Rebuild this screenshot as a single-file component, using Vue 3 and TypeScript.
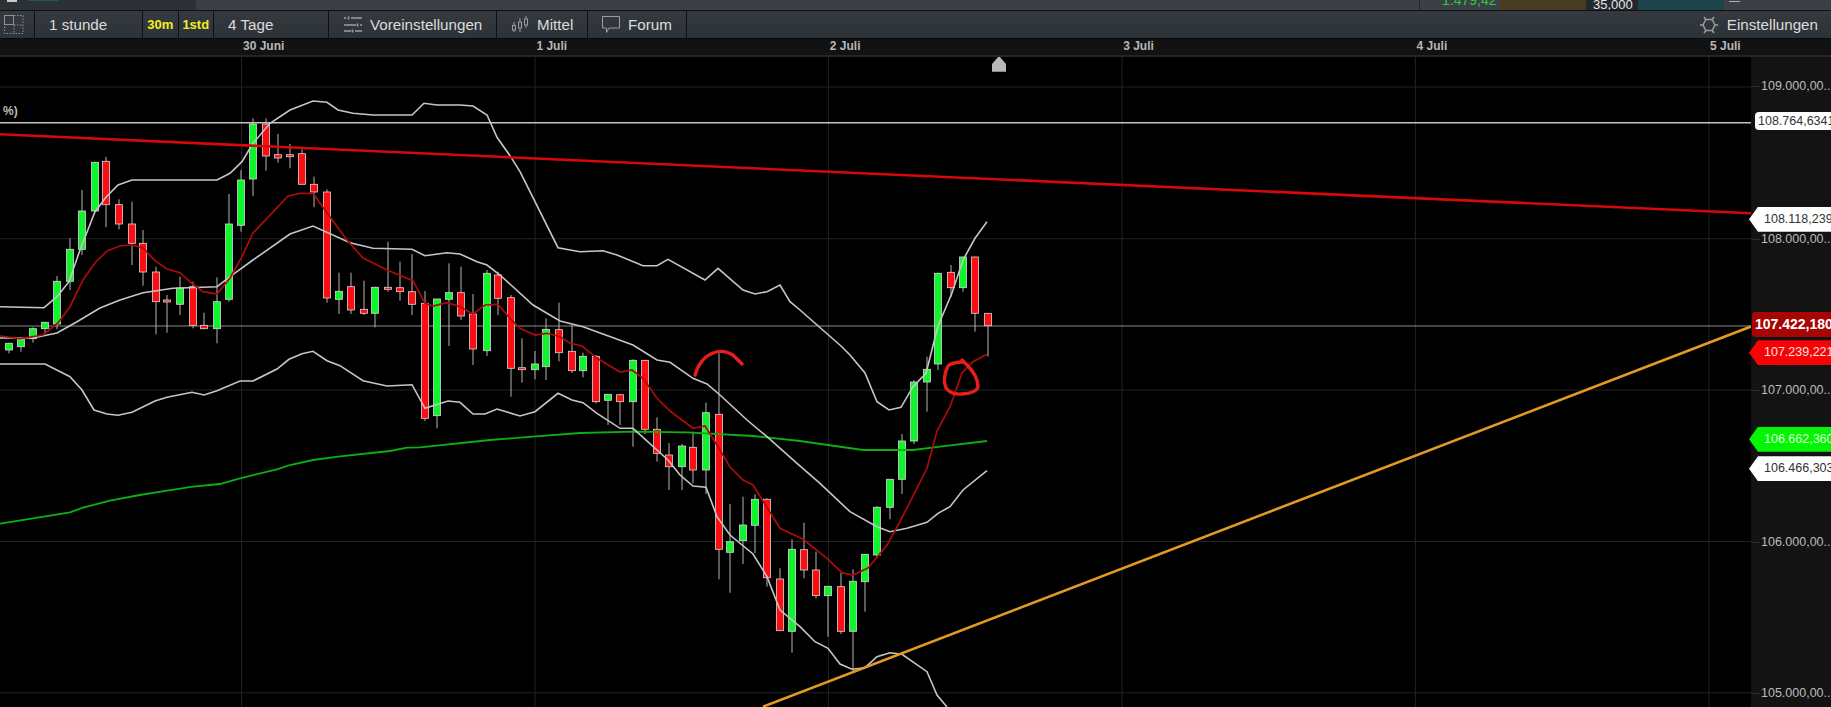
<script setup lang="ts">
type Pt = [number, number];
// x, wick top, wick bottom, body top, body bottom, up
type Candle = [number, number, number, number, number, boolean];

const dates = ['30 Juni', '1 Juli', '2 Juli', '3 Juli', '4 Juli', '5 Juli'];
const gridX = [241.5, 535, 828.4, 1122, 1415.4, 1709];
const gridY = [87, 238.7, 390, 541.5, 692.8];

const candles: Candle[] = [
  [9, 342.7, 353.3, 343.3, 350, true], [21, 337.3, 351.7, 339.3, 346.7, true],
  [33, 327.3, 342.7, 328.7, 338.7, true], [45, 321.7, 333.3, 322.3, 328.7, true],
  [57, 276, 329.3, 281.3, 324, true], [70, 238.3, 290, 249.3, 281.3, true],
  [82, 190, 255, 211, 249.3, true], [95, 161.7, 211.7, 162.3, 211, true],
  [106, 156.7, 227.3, 161.3, 204.7, false], [119, 199.3, 229.3, 204.7, 224, false],
  [132, 201.7, 265, 224, 243.3, false], [143, 230, 285.7, 243.3, 272, false],
  [156, 266.7, 334.3, 272, 301.7, false], [167, 295, 332.7, 300, 302, false],
  [180, 276.7, 315, 288, 304.3, true], [193, 281.7, 328.3, 286.7, 325.3, false],
  [204, 312.7, 329.3, 325.3, 328.7, false], [217, 277.3, 343.3, 301.7, 328.7, true],
  [229, 194, 301.7, 224, 299.3, true], [241, 170, 231.7, 180, 225.3, true],
  [253, 118.3, 196, 124, 179, true], [266, 118.3, 170.7, 124, 156, false],
  [278, 134, 162.7, 154.7, 158, false], [290, 144, 168.3, 154.7, 156.7, false],
  [302, 149.3, 185, 153.7, 184.3, false], [314, 176.7, 207.3, 184.3, 192, false],
  [327, 189.3, 302.7, 192, 298, false], [339, 272.7, 314, 291.3, 299.3, true],
  [351, 272.7, 314, 286.7, 310, false], [364, 280.7, 315, 309.3, 313.3, false],
  [375, 286.7, 327.3, 287.3, 313.3, true], [388, 241.7, 291.7, 287.3, 289.3, false],
  [400, 261.7, 300.7, 287.7, 291.7, false], [412, 254, 315, 291.7, 304.3, false],
  [425, 291, 421, 303.3, 418.3, false], [437, 299, 428.3, 299, 415.7, true],
  [449, 263.3, 346, 292.7, 299.3, true], [461, 266.7, 320, 292.7, 316, false],
  [473, 294, 365, 314, 349, false], [487, 270, 356, 273.3, 350.7, true],
  [498, 271.7, 315, 275, 298.3, false], [511, 295, 396.7, 297.7, 368.3, false],
  [522, 338.3, 382.7, 367.7, 369.7, false], [535, 351, 379.3, 364, 369.7, true],
  [546, 318.3, 380, 329.3, 366.7, true], [559, 302.7, 361.3, 329.7, 352.7, false],
  [572, 325, 373, 351.3, 370.7, false], [583, 352.7, 377.3, 356.3, 370.7, true],
  [596, 355, 403.3, 356.3, 401.7, false], [608, 394.3, 425, 394.3, 400.3, true],
  [620, 394.3, 425, 394.7, 401.7, false], [633, 359.3, 446.7, 360.3, 401.7, true],
  [645, 360, 434, 360.3, 429.3, false], [657, 417.3, 461.7, 429.3, 453.3, false],
  [669, 443, 490, 455, 466.7, false], [682, 444, 490, 446, 466.7, true],
  [693, 431.7, 483.3, 447.3, 470, false], [706, 402.5, 494, 412.7, 470, true],
  [719, 353.3, 579.3, 414.3, 549.3, false], [730, 504, 592.7, 541.7, 552.3, true],
  [743, 496.7, 564, 525, 540.7, true], [755, 494.3, 553.3, 499.3, 525.3, true],
  [767, 498.3, 586.7, 499.3, 577.7, false], [780, 568.3, 630.7, 579, 630.7, false],
  [792, 539.3, 652.7, 549.3, 631.3, true], [804, 522.7, 578.3, 549.7, 570, false],
  [816, 551.7, 598.3, 570, 595.7, false], [828, 586, 636.7, 586.3, 595.7, true],
  [841, 572.7, 634, 586.7, 631.3, false], [853, 569.3, 671.7, 581.3, 631.3, true],
  [865, 554, 611.7, 554.3, 581.7, true], [877, 506, 558.3, 507.3, 555, true],
  [890, 479.3, 519.3, 479.3, 507.3, true], [902, 434, 494, 441, 479.3, true],
  [914, 380, 444, 382, 441, true], [927, 356.7, 411.7, 369.3, 382, true],
  [938, 272.7, 370, 273.3, 364, true], [951, 265, 297, 272.3, 287.7, false],
  [963, 256.7, 291.7, 257, 287.7, true], [975, 256.7, 331.7, 257, 313.3, false],
  [988, 313.3, 356.7, 313.3, 325.7, false],
];

const upperBand: Pt[] = [
  [0, 306.7], [44, 307.7], [57, 296.7], [69, 281.7], [80, 250], [95, 211.7], [106, 197.3], [118, 185],
  [132, 180], [217, 180], [230, 173.3], [242, 161.7], [253, 143.3], [270, 123.3], [290, 110], [313, 101],
  [327, 102.3], [338, 110], [353, 113.3], [373, 115], [412, 115], [424, 103.3], [437, 105], [460, 105],
  [473, 106], [487, 115], [497, 137.3], [510, 155.7], [520, 171.7], [558, 247.7], [580, 251.7], [603, 250.7],
  [617, 255], [643, 265.7], [657, 265.7], [668, 259.3], [705, 280], [718, 268.3], [743, 290], [755, 294],
  [767, 291.7], [780, 285], [790, 301.7], [800, 310], [841, 346], [850, 355], [865, 373], [877, 401.7],
  [889, 410], [901, 407.3], [913, 386.7], [926, 373.3], [938, 326], [952, 293], [963, 260], [975, 238.3], [987, 221.7],
];
const middleBand: Pt[] = [
  [0, 338], [33, 338], [57, 333], [77, 321.7], [100, 308], [120, 300], [143, 292.7], [173, 288.3], [217, 286.7],
  [230, 276.7], [253, 260], [290, 234], [313, 226], [350, 242.7], [373, 248.3], [412, 249.3], [425, 255.7],
  [447, 252.7], [460, 254], [477, 261.7], [487, 265], [500, 275], [533, 305], [560, 321], [583, 326.7], [633, 345],
  [657, 360], [670, 362.3], [693, 378.3], [707, 384], [720, 395], [747, 420], [767, 436.7], [797, 463.3],
  [820, 483.3], [850, 511.7], [877, 526.7], [890, 531.7], [907, 528.3], [927, 522.3], [938, 513.3], [950, 506.7],
  [963, 490], [987, 470.7],
];
const lowerBand: Pt[] = [
  [0, 364], [45, 364], [70, 376.7], [82, 390], [94, 410], [107, 414], [118, 415.3], [132, 412.3], [155, 401],
  [167, 397.3], [192, 392.3], [204, 395], [217, 390.7], [240, 381], [253, 381], [277, 369], [289, 359.3],
  [302, 353.7], [313, 351.3], [327, 360.7], [340, 365.7], [363, 380.7], [387, 386], [412, 384.7], [425, 408.3],
  [448, 401], [460, 402.3], [473, 414], [485, 414], [497, 409], [520, 416], [535, 411.7], [558, 393.3], [572, 400],
  [583, 402.7], [597, 413.3], [620, 428.3], [633, 428.3], [668, 460], [680, 475], [693, 486], [706, 487.3],
  [717, 516.7], [730, 535], [753, 554], [767, 576.7], [780, 610], [800, 626.7], [815, 641.7], [828, 648.3],
  [840, 664], [852, 669.3], [865, 667.7], [877, 656.7], [890, 652.7], [902, 654.3], [927, 671.7], [937, 695], [947, 707],
];
const average: Pt[] = [
  [0, 336], [20, 338.7], [43, 335], [58, 323], [70, 306.7], [83, 280], [95, 262.7], [107, 251], [120, 246], [132, 245],
  [143, 248], [155, 260.7], [167, 269], [180, 272.7], [193, 284.3], [203, 291.7], [217, 294], [230, 278], [242, 256.7],
  [253, 233], [267, 218.3], [288, 196], [300, 193.3], [313, 193.3], [327, 213], [347, 240], [363, 258], [387, 270],
  [413, 280.7], [425, 303.3], [433, 306], [447, 302.7], [460, 306.7], [473, 314], [485, 305], [498, 304.3], [510, 318.3],
  [520, 328.3], [535, 335], [547, 333.3], [560, 336.7], [570, 343.3], [582, 346], [597, 358.3], [620, 372], [632, 370],
  [643, 378.3], [657, 398.3], [670, 411], [693, 428.3], [705, 426], [718, 446.7], [730, 467], [743, 480], [753, 485],
  [780, 528.3], [803, 539.3], [827, 558.3], [842, 572.7], [853, 575], [868, 568], [887, 545], [900, 521.7], [927, 468.3],
  [937, 431], [950, 406.7], [962, 373], [973, 361.7], [987, 354.3],
];
const longAverage: Pt[] = [
  [0, 523.7], [33, 518.3], [70, 512.3], [83, 507.7], [110, 500.7], [140, 495], [167, 490.7], [193, 486.7], [220, 484],
  [240, 478.3], [277, 469.3], [290, 465], [313, 460], [340, 456.3], [390, 451], [407, 447.7], [420, 447.3], [490, 440],
  [533, 436.7], [580, 433], [633, 431.7], [687, 432.3], [753, 436], [800, 441], [863, 450], [913, 450], [940, 446.7], [987, 441],
];

const toPoints = (pts: Pt[]) => pts.map((p) => p.join(',')).join(' ');

const bands = [upperBand, middleBand, lowerBand].map(toPoints);

const axisTop = 57;
const ticks = [
  { y: 86, text: '109.000,00..' },
  { y: 238.7, text: '108.000,00..' },
  { y: 390, text: '107.000,00..' },
  { y: 541.5, text: '106.000,00..' },
  { y: 692.8, text: '105.000,00..' },
];
const tags = [
  { y: 124.5, text: '108.764,6341', kind: 'plain' },
  { y: 219.3, text: '108.118,239', kind: 'white' },
  { y: 324.5, text: '107.422,180', kind: 'last' },
  { y: 352.7, text: '107.239,221', kind: 'red' },
  { y: 439.3, text: '106.662,360', kind: 'green' },
  { y: 468.7, text: '106.466,303', kind: 'white' },
];
</script>

<template>
  <div class="page">
    <div class="quotes">
      <div class="quotes-left">
        <span class="dash"></span>
        <span class="teal-bit"></span>
      </div>
      <div class="quotes-right">
        <span class="change">1.479,42</span>
        <span class="box box-brown"></span>
        <span class="size">35,000</span>
        <span class="box box-teal"></span>
        <span class="dash dash-right"></span>
      </div>
    </div>

    <div class="toolbar">
      <div class="cell cell-grid">
        <svg width="20" height="20" viewBox="0 0 20 20" fill="none" stroke="#8d9195">
          <rect x="0.5" y="0.5" width="9" height="9" />
          <path d="M10 .5h9v18H.5V10M10 10h9M10 10v9" stroke-dasharray="1.5 1.5" />
        </svg>
      </div>
      <div class="cell cell-range">1 stunde</div>
      <div class="cell cell-pick">30m</div>
      <div class="cell cell-pick">1std</div>
      <div class="cell cell-days">4 Tage</div>
      <div class="cell cell-presets">
        <svg width="18" height="18" viewBox="0 0 18 18" fill="none" stroke="#9a9ea2" stroke-width="1.6">
          <path d="M0 2h2M7 2h11M4.5 .5v3M0 9h12M16 9h2M13.5 7.5v3M0 15h7M11 15h7M8.5 13.5v3" />
        </svg>
        <span>Voreinstellungen</span>
      </div>
      <div class="cell cell-mean">
        <svg width="18" height="20" viewBox="0 0 18 20" fill="none" stroke="#9a9ea2">
          <path d="M3 7v3M3 15v2M9 3v4M9 13v4M15 1v3M15 10v3" />
          <rect x="1.5" y="10.5" width="3" height="4.5" />
          <rect x="7.5" y="7" width="3" height="6" />
          <rect x="13.5" y="4" width="3" height="6" />
        </svg>
        <span>Mittel</span>
      </div>
      <div class="cell cell-forum">
        <svg width="18" height="18" viewBox="0 0 18 18" fill="none" stroke="#9a9ea2">
          <path d="M.5 .5h17v11.5H7L4.5 16.5V12H.5z" />
        </svg>
        <span>Forum</span>
      </div>
      <div class="settings">
        <svg width="18" height="18" viewBox="0 0 18 18" fill="none" stroke="#9a9ea2" stroke-width="1.5">
          <path d="M5.8 3.5h6.4L15 9l-2.8 5.500H5.8L3 9zM0 9h3M15 9h3M4 1l1.800 2.500M14 1l-1.800 2.500M4 17l1.800-2.500M14 17l-1.800-2.500" />
        </svg>
        <span>Einstellungen</span>
      </div>
    </div>

    <div class="dates">
      <span v-for="d in dates" :key="d" class="date">{{ d }}</span>
    </div>

    <div class="chart">
      <div class="plot">
        <svg class="plot-svg" width="1751" height="650" viewBox="0 57 1751 650">
          <g stroke="#232323" stroke-width="1">
            <line v-for="x in gridX" :key="x" :x1="x" y1="57" :x2="x" y2="707" />
            <line v-for="y in gridY" :key="y" x1="0" :y1="y" x2="1751" :y2="y" />
          </g>

          <line x1="0" y1="122.7" x2="1751" y2="122.7" stroke="#c4c4c4" stroke-width="1.6" />
          <line x1="0" y1="326" x2="1751" y2="326" stroke="#8a8a8a" stroke-width="1.2" />

          <g v-for="c in candles" :key="c[0]">
            <line :x1="c[0]" :y1="c[1]" :x2="c[0]" :y2="c[2]" stroke="#b4b4b4" stroke-width="1" />
            <rect
              :x="c[0] - 3.5"
              :y="c[3]"
              width="7"
              :height="c[4] - c[3]"
              :fill="c[5] ? '#0ff52d' : '#fb0d12'"
              stroke="#d8d8d8"
              stroke-width="0.8"
            />
          </g>

          <polyline :points="toPoints(longAverage)" fill="none" stroke="#0cb012" stroke-width="1.8" />
          <polyline
            v-for="(b, i) in bands"
            :key="i"
            :points="b"
            fill="none"
            stroke="#c6c6c6"
            stroke-width="1.6"
          />
          <polyline :points="toPoints(average)" fill="none" stroke="#ad0b0b" stroke-width="1.7" />

          <line x1="0" y1="134.3" x2="1751" y2="213.3" stroke="#d80808" stroke-width="2.6" />
          <line x1="763" y1="706.7" x2="1751" y2="326.5" stroke="#e29a20" stroke-width="2.6" />

          <g fill="none" stroke="#ea1c1c" stroke-width="3.4" stroke-linecap="round">
            <path d="M695 375Q700 358 713 353Q723 349 733 355L742 364" />
            <path d="M962 360L967 365Q978 376 978 387Q976 393 962 394Q951 395 946 388Q942 378 948 366Q952 362 963 362" />
          </g>

          <polygon points="999,56 1006,64 1006,71.7 992,71.7 992,64" fill="#b9b9b9" />
        </svg>
        <span class="legend">%)</span>
      </div>

      <div class="axis">
        <div
          v-for="t in ticks"
          :key="t.text"
          class="tick"
          :style="{ top: t.y - axisTop - 8 + 'px' }"
        >
          {{ t.text }}
        </div>
        <div
          v-for="t in tags"
          :key="t.text"
          :class="['tag', 'tag-' + t.kind]"
          :style="{ top: t.y - axisTop - 12.5 + 'px' }"
        >
          {{ t.text }}
        </div>
      </div>
    </div>
  </div>
</template>

<style scoped>
.page {
  width: 1831px;
  height: 707px;
  display: flex;
  flex-direction: column;
  overflow: hidden;
  background: #000;
  font-family: "Liberation Sans", Arial, sans-serif;
}

.quotes {
  height: 10px;
  flex: none;
  display: flex;
  justify-content: space-between;
  overflow: hidden;
  background: #3b4047;
  border-bottom: 1px solid #0e1012;
}

.quotes-left {
  width: 196px;
  display: flex;
  align-items: flex-start;
  gap: 11px;
  padding-left: 7px;
  box-sizing: border-box;
  background: #2c3136;
}

.dash {
  width: 10px;
  height: 2px;
  background: #c9c9c9;
}

.teal-bit {
  width: 30px;
  height: 1px;
  background: #1d5a60;
}

.quotes-right {
  display: flex;
  align-items: flex-start;
  border-left: 1px solid #22262a;
  padding-left: 22px;
}

.change {
  width: 58px;
  margin-top: -8px;
  font-size: 14px;
  line-height: 16px;
  color: #2bc83a;
}

.box {
  width: 86px;
  height: 10px;
}

.box-brown {
  background: #493a22;
}

.box-teal {
  background: #1c444a;
}

.size {
  width: 52px;
  height: 10px;
  box-sizing: border-box;
  padding-left: 7px;
  font-size: 13px;
  line-height: 9px;
  color: #e4e4e4;
  background: #23282c;
}

.dash-right {
  width: 11px;
  height: 1px;
  margin: 1px 91px 0 5px;
  background: #b0b0b0;
}

.toolbar {
  height: 27px;
  flex: none;
  display: flex;
  align-items: stretch;
  background: linear-gradient(#343a3f, #2d3237);
  border-bottom: 1px solid #07090a;
  color: #dcdcdc;
  font-size: 15.2px;
}

.cell {
  display: flex;
  align-items: center;
  box-sizing: border-box;
  border-right: 1px solid #0d0f11;
}

.cell svg {
  flex: none;
}

.cell-grid {
  width: 35px;
  padding-left: 4px;
}

.cell-range {
  width: 108px;
  padding-left: 14px;
}

.cell-pick {
  width: 35.5px;
  justify-content: center;
  font-size: 13px;
  font-weight: bold;
  color: #f4ee27;
}

.cell-days {
  width: 115px;
  padding-left: 14px;
}

.cell-presets {
  width: 168px;
  padding-left: 15px;
  gap: 8px;
}

.cell-mean {
  width: 91px;
  padding-left: 14px;
  gap: 8px;
}

.cell-forum {
  width: 99px;
  padding-left: 14px;
  gap: 8px;
}

.settings {
  margin-left: auto;
  padding-right: 13px;
  display: flex;
  align-items: center;
  gap: 9px;
}

.dates {
  height: 18px;
  flex: none;
  display: flex;
  box-sizing: border-box;
  padding-left: 243px;
  background: #121212;
  border-bottom: 2px solid #262626;
}

.date {
  width: 293.4px;
  flex: none;
  font-size: 12px;
  font-weight: bold;
  line-height: 15px;
  color: #b8b8b8;
}

.chart {
  flex: 1;
  display: flex;
  min-height: 0;
}

.plot {
  position: relative;
  width: 1751px;
  flex: none;
}

.plot-svg {
  display: block;
}

.legend {
  position: absolute;
  left: 3px;
  top: 47px;
  font-size: 12px;
  font-weight: bold;
  color: #bdbdbd;
}

.axis {
  position: relative;
  flex: 1;
  background: #131313;
  font-size: 12.5px;
}

.tick {
  position: absolute;
  left: 10px;
  right: 0;
  height: 16px;
  line-height: 16px;
  white-space: nowrap;
  color: #bcbcbc;
}

.tick::before {
  content: "";
  position: absolute;
  left: -10px;
  top: 8px;
  width: 9px;
  height: 1px;
  background: #2c2c2c;
}

.tag {
  position: absolute;
  left: -2px;
  right: 0;
  height: 25px;
  line-height: 25px;
  box-sizing: border-box;
  padding-left: 15px;
  white-space: nowrap;
  overflow: hidden;
  clip-path: polygon(0 50%, 9px 0, 100% 0, 100% 100%, 9px 100%);
}

.tag-white {
  background: #fff;
  color: #333;
}

.tag-red {
  background: #f40404;
  color: #ffe0e0;
}

.tag-green {
  background: #05f505;
  color: #d8ffd8;
}

.tag-plain {
  left: 4px;
  height: 18px;
  line-height: 18px;
  padding-left: 3px;
  background: #fff;
  color: #333;
  border-radius: 4px 0 0 4px;
  clip-path: none;
}

.tag-last {
  left: 1px;
  padding-left: 3px;
  background: #a70404;
  color: #fff;
  font-size: 14px;
  font-weight: bold;
  border-radius: 3px 0 0 3px;
  clip-path: none;
}
</style>
